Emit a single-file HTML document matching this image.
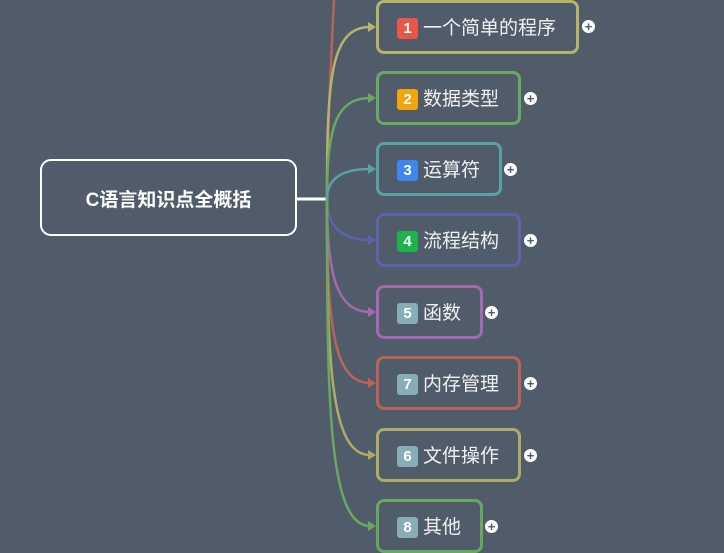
<!DOCTYPE html>
<html><head><meta charset="utf-8"><style>
html,body{margin:0;padding:0}
body{width:724px;height:553px;background:#505c6a;position:relative;overflow:hidden;font-family:"Liberation Sans","Noto Sans CJK SC",sans-serif}
.root{position:absolute;left:40px;top:159px;width:253px;height:71px;border:2.5px solid #fff;border-radius:11px;color:#fff;font-weight:bold;font-size:19px;display:flex;align-items:center;justify-content:center;padding-top:2px;box-sizing:content-box}
.n{position:absolute;left:376px;height:48px;border:3px solid;border-radius:8px;box-sizing:content-box}
.b{position:absolute;left:18px;top:15px;width:21px;height:21px;border-radius:3px;color:#fff;font-weight:bold;font-size:15px;text-align:center;line-height:21px}
.t{position:absolute;left:44px;top:13px;color:#f0f0f0;font-size:19px;line-height:26px;white-space:nowrap}
.p{position:absolute;width:13px;height:13px;border-radius:50%;background:#fff;color:#505c6a;font-size:13px;font-weight:bold;line-height:13px;text-align:center}
svg{position:absolute;left:0;top:0}
</style></head><body>
<svg width="724" height="553" fill="none" stroke-width="2.5">
<path d="M297 199H327" stroke="#fff" stroke-width="3"/>
<path d="M327 199C328 120 331 60 334 0" stroke="#b8645a"/>
<path d="M327 199C327 80 330 27 370 27" stroke="#b5b46a"/><path d="M368 22l8 5-8 5z" fill="#b5b46a" stroke="none"/>
<path d="M327 199C327 130 335 98 370 98" stroke="#6aa864"/><path d="M368 93l8 5-8 5z" fill="#6aa864" stroke="none"/>
<path d="M327 199C327 180 340 169 370 169" stroke="#5ba0a4"/><path d="M368 164l8 5-8 5z" fill="#5ba0a4" stroke="none"/>
<path d="M327 199C327 225 340 240 370 240" stroke="#5c63a8"/><path d="M368 235l8 5-8 5z" fill="#5c63a8" stroke="none"/>
<path d="M327 199C327 270 335 312 370 312" stroke="#a46ab0"/><path d="M368 307l8 5-8 5z" fill="#a46ab0" stroke="none"/>
<path d="M327 199C327 320 332 383 370 383" stroke="#b8645a"/><path d="M368 378l8 5-8 5z" fill="#b8645a" stroke="none"/>
<path d="M327 199C327 360 330 455 370 455" stroke="#b0ab64"/><path d="M368 450l8 5-8 5z" fill="#b0ab64" stroke="none"/>
<path d="M327 199C327 400 328 526 370 526" stroke="#6aa860"/><path d="M368 521l8 5-8 5z" fill="#6aa860" stroke="none"/>
</svg>
<div class="root">C语言知识点全概括</div>

<div class="n" style="top:0;width:197px;border-color:#b5b46a"><div class="b" style="background:#e8554a">1</div><div class="t">一个简单的程序</div></div>
<div class="p" style="left:582px;top:20px">+</div>
<div class="n" style="top:71px;width:139px;border-color:#6aa864"><div class="b" style="background:#f3a60b">2</div><div class="t">数据类型</div></div>
<div class="p" style="left:524px;top:92px">+</div>
<div class="n" style="top:142px;width:120px;border-color:#5ba0a4"><div class="b" style="background:#3f87f0">3</div><div class="t">运算符</div></div>
<div class="p" style="left:504px;top:163px">+</div>
<div class="n" style="top:213px;width:139px;border-color:#5c63a8"><div class="b" style="background:#1db24c">4</div><div class="t">流程结构</div></div>
<div class="p" style="left:524px;top:234px">+</div>
<div class="n" style="top:285px;width:101px;border-color:#a46ab0"><div class="b" style="background:#87adb6">5</div><div class="t">函数</div></div>
<div class="p" style="left:485px;top:306px">+</div>
<div class="n" style="top:356px;width:139px;border-color:#b8645a"><div class="b" style="background:#87adb6">7</div><div class="t">内存管理</div></div>
<div class="p" style="left:524px;top:377px">+</div>
<div class="n" style="top:428px;width:139px;border-color:#b0ab64"><div class="b" style="background:#87adb6">6</div><div class="t">文件操作</div></div>
<div class="p" style="left:524px;top:449px">+</div>
<div class="n" style="top:499px;width:101px;border-color:#6aa860"><div class="b" style="background:#87adb6">8</div><div class="t">其他</div></div>
<div class="p" style="left:485px;top:520px">+</div>
</body></html>
